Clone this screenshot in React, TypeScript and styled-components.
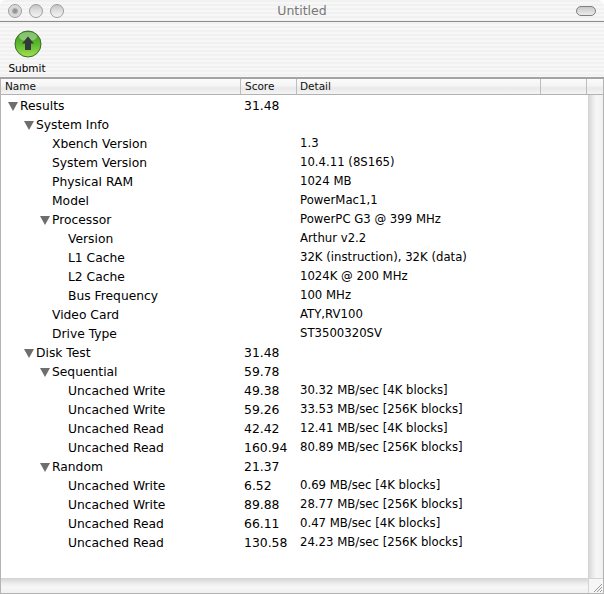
import React from "react";
import styled, { createGlobalStyle } from "styled-components";

const GlobalStyle = createGlobalStyle`
  html, body {
    margin: 0;
    padding: 0;
    background: #fff;
  }
`;

const FONT = `"DejaVu Sans", Verdana, sans-serif`;

// pinstripes used by the aqua title bar and toolbar
const PINSTRIPE = `repeating-linear-gradient(180deg, #f1f1f1 0px, #f1f1f1 2px, #f7f7f7 2px, #f7f7f7 4px)`;

const Win = styled.div`
  width: 604px;
  height: 594px;
  display: flex;
  flex-direction: column;
  overflow: hidden;
  font-family: ${FONT};
  color: #000;
  background: #fff;
`;

const TitleBar = styled.div`
  height: 21px;
  flex: none;
  display: flex;
  align-items: center;
  justify-content: space-between;
  padding: 0 8px 0 8px;
  position: relative;
  background: ${PINSTRIPE};
  border-bottom: 1px solid #8c8c8c;
  border-radius: 6px 6px 0 0;
`;

const Lights = styled.div`
  display: flex;
  gap: 7px;
`;

const Light = styled.span<{ $dot?: boolean }>`
  width: 14px;
  height: 14px;
  box-sizing: border-box;
  border-radius: 50%;
  border: 1px solid #9d9d9d;
  background: ${(p) =>
    p.$dot
      ? "radial-gradient(circle at 50% 50%, #8f8f8f 0, #9a9a9a 2px, #d4d4d4 3.4px, #e6e6e6 100%)"
      : "linear-gradient(180deg, #c4c4c4 0%, #dedede 45%, #f4f4f4 100%)"};
`;

const TitleText = styled.div`
  position: absolute;
  left: 0;
  right: 0;
  top: 3px;
  text-align: center;
  font-size: 12.5px;
  line-height: 16px;
  color: #777;
`;

const Pill = styled.span`
  width: 20px;
  height: 10px;
  box-sizing: border-box;
  border-radius: 5px;
  border: 1px solid #7f7f7f;
  background: linear-gradient(180deg, #c8c8c8 0%, #ececec 100%);
`;

const Toolbar = styled.div`
  height: 57px;
  flex: none;
  box-sizing: border-box;
  padding: 8px 0 0 9px;
  background: ${PINSTRIPE};
  border-bottom: 2px solid #a3a3a3;
`;

const ToolButton = styled.div`
  width: 38px;
  display: flex;
  flex-direction: column;
  align-items: center;
  gap: 4px;
`;

const ToolLabel = styled.span`
  font-size: 10.5px;
  line-height: 13px;
  white-space: nowrap;
  margin-right: 2px;
`;

const Body = styled.div`
  flex: 1;
  min-height: 0;
  display: flex;
  flex-direction: column;
  border-left: 1px solid #b4b4b4;
  border-right: 1px solid #b4b4b4;
  border-bottom: 1px solid #b4b4b4;
`;

const HeaderRow = styled.div`
  height: 15px;
  flex: none;
  display: grid;
  grid-template-columns: 240px 56px 244px 46px 1fr;
  background: linear-gradient(180deg, #fbfbfb 0%, #f4f4f4 45%, #e9e9e9 60%, #f4f4f4 100%);
  border-bottom: 1px solid #b2b2b2;
`;

const HeaderCell = styled.div<{ $last?: boolean; $inset?: number }>`
  font-size: 10.5px;
  line-height: 15px;
  padding-left: ${(p) => p.$inset ?? 4}px;
  border-right: ${(p) => (p.$last ? "none" : "1px solid #bdbdbd")};
  color: #111;
`;

const Middle = styled.div`
  flex: 1;
  min-height: 0;
  display: flex;
`;

const Rows = styled.div`
  flex: 1;
  padding-top: 1px;
`;

const RowLine = styled.div`
  height: 19px;
  display: grid;
  grid-template-columns: 243px 56px 1fr;
  font-size: 12.3px;
  line-height: 19px;
  white-space: nowrap;
`;

const NameCell = styled.div<{ $depth: number }>`
  display: flex;
  align-items: center;
  padding-top: 1px;
  padding-left: ${(p) => 7 + p.$depth * 16}px;
`;

const Disclosure = styled.span`
  width: 0;
  height: 0;
  flex: none;
  margin-right: 2px;
  border-left: 5.5px solid transparent;
  border-right: 5.5px solid transparent;
  border-top: 9px solid #6e6e6e;
`;

const Spacer = styled.span`
  width: 12px;
  flex: none;
`;

const ScoreCell = styled.div`
  font-size: 12.4px;
`;

const DetailCell = styled.div`
  font-size: 11.7px;
`;

const VTrack = styled.div`
  width: 15px;
  flex: none;
  background: linear-gradient(90deg, #d2d2d2 0%, #ececec 35%, #f7f7f7 60%, #f0f0f0 100%);
`;

const BottomBar = styled.div`
  height: 15px;
  flex: none;
  display: flex;
`;

const HTrack = styled.div`
  flex: 1;
  background: linear-gradient(180deg, #d2d2d2 0%, #ececec 35%, #f7f7f7 60%, #f0f0f0 100%);
`;

const Corner = styled.div`
  width: 15px;
  flex: none;
  background: #f6f6f6;
  border-top: 1px solid #d4d4d4;
  border-left: 1px solid #d4d4d4;
  box-sizing: border-box;
  display: flex;
  align-items: flex-end;
  justify-content: flex-end;
`;

type Row = { name: string; depth: number; open?: boolean; score?: string; detail?: string };

const rows: Row[] = [
  { name: "Results", depth: 0, open: true, score: "31.48" },
  { name: "System Info", depth: 1, open: true },
  { name: "Xbench Version", depth: 2, detail: "1.3" },
  { name: "System Version", depth: 2, detail: "10.4.11 (8S165)" },
  { name: "Physical RAM", depth: 2, detail: "1024 MB" },
  { name: "Model", depth: 2, detail: "PowerMac1,1" },
  { name: "Processor", depth: 2, open: true, detail: "PowerPC G3 @ 399 MHz" },
  { name: "Version", depth: 3, detail: "Arthur v2.2" },
  { name: "L1 Cache", depth: 3, detail: "32K (instruction), 32K (data)" },
  { name: "L2 Cache", depth: 3, detail: "1024K @ 200 MHz" },
  { name: "Bus Frequency", depth: 3, detail: "100 MHz" },
  { name: "Video Card", depth: 2, detail: "ATY,RV100" },
  { name: "Drive Type", depth: 2, detail: "ST3500320SV" },
  { name: "Disk Test", depth: 1, open: true, score: "31.48" },
  { name: "Sequential", depth: 2, open: true, score: "59.78" },
  { name: "Uncached Write", depth: 3, score: "49.38", detail: "30.32 MB/sec [4K blocks]" },
  { name: "Uncached Write", depth: 3, score: "59.26", detail: "33.53 MB/sec [256K blocks]" },
  { name: "Uncached Read", depth: 3, score: "42.42", detail: "12.41 MB/sec [4K blocks]" },
  { name: "Uncached Read", depth: 3, score: "160.94", detail: "80.89 MB/sec [256K blocks]" },
  { name: "Random", depth: 2, open: true, score: "21.37" },
  { name: "Uncached Write", depth: 3, score: "6.52", detail: "0.69 MB/sec [4K blocks]" },
  { name: "Uncached Write", depth: 3, score: "89.88", detail: "28.77 MB/sec [256K blocks]" },
  { name: "Uncached Read", depth: 3, score: "66.11", detail: "0.47 MB/sec [4K blocks]" },
  { name: "Uncached Read", depth: 3, score: "130.58", detail: "24.23 MB/sec [256K blocks]" },
];

const SubmitIcon = () => (
  <svg width="28" height="28" viewBox="0 0 28 28">
    <defs>
      <linearGradient id="ball" x1="0" y1="0" x2="0" y2="1">
        <stop offset="0" stopColor="#3f9a1e" />
        <stop offset="0.5" stopColor="#5cb82c" />
        <stop offset="1" stopColor="#a4e052" />
      </linearGradient>
    </defs>
    <circle cx="14" cy="14" r="13" fill="url(#ball)" stroke="#3a6a2a" strokeWidth="1" />
    <ellipse cx="14" cy="6.5" rx="9" ry="4.5" fill="#fff" opacity="0.35" />
    <path d="M14 6.5 L20 13.5 H17 V20 H11 V13.5 H8 Z" fill="#33383a" />
  </svg>
);

const App: React.FC = () => {
  return (
    <Win>
      <GlobalStyle />
      <TitleBar>
        <Lights>
          <Light $dot />
          <Light />
          <Light />
        </Lights>
        <TitleText>Untitled</TitleText>
        <Pill />
      </TitleBar>
      <Toolbar>
        <ToolButton>
          <SubmitIcon />
          <ToolLabel>Submit</ToolLabel>
        </ToolButton>
      </Toolbar>
      <Body>
        <HeaderRow>
          <HeaderCell>Name</HeaderCell>
          <HeaderCell>Score</HeaderCell>
          <HeaderCell $inset={3}>Detail</HeaderCell>
          <HeaderCell />
          <HeaderCell $last />
        </HeaderRow>
        <Middle>
          <Rows>
            {rows.map((r, i) => (
              <RowLine key={i}>
                <NameCell $depth={r.depth}>
                  {r.open ? <Disclosure /> : <Spacer />}
                  <span>{r.name}</span>
                </NameCell>
                <ScoreCell>{r.score}</ScoreCell>
                <DetailCell>{r.detail}</DetailCell>
              </RowLine>
            ))}
          </Rows>
          <VTrack />
        </Middle>
        <BottomBar>
          <HTrack />
          <Corner>
            <svg width="12" height="12" viewBox="0 0 12 12">
              <path d="M11 3 L3 11 M11 6 L6 11 M11 9 L9 11" stroke="#9a9a9a" strokeWidth="1" fill="none" />
            </svg>
          </Corner>
        </BottomBar>
      </Body>
    </Win>
  );
};

export default App;
